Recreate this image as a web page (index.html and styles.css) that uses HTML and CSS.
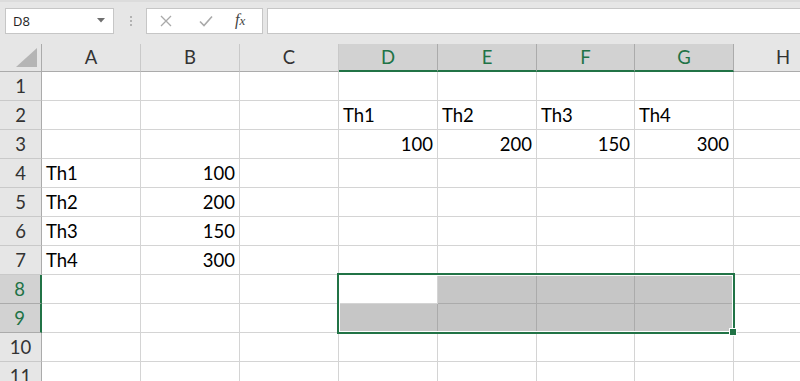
FILE: index.html
```html
<!DOCTYPE html>
<html>
<head>
<meta charset="utf-8">
<link rel="stylesheet" href="styles.css">
</head>
<body>
<div class="app">
  <div class="fbar">
    <div class="namebox">
      <span class="nb-text">D8</span>
      <svg class="caret" width="8" height="5" viewBox="0 0 8 5"><path d="M0 0 H8 L4 4.5 Z" fill="#6f6f6f"/></svg>
    </div>
    <div class="grip"><i></i><i></i><i></i></div>
    <div class="fbtns">
      <svg class="ico-x" width="12" height="12" viewBox="0 0 12 12"><path d="M1 1 L11 11 M11 1 L1 11" stroke="#a9a9a9" stroke-width="1.3" fill="none"/></svg>
      <svg class="ico-check" width="14" height="12" viewBox="0 0 14 12"><path d="M1 6.5 L5 10.5 L13 1.5" stroke="#a9a9a9" stroke-width="1.6" fill="none"/></svg>
      <span class="fx"><span class="fx-f">f</span><span class="fx-x">x</span></span>
    </div>
    <div class="finput"></div>
  </div>

  <div class="sheet">
    <div class="grid">
      <div class="corner"><svg width="22" height="20" viewBox="0 0 22 20"><path d="M21 0 V19 H0 Z" fill="#b5b5b5"/></svg></div>
      <div class="ch">A</div><div class="ch">B</div><div class="ch">C</div>
      <div class="ch hsel">D</div><div class="ch hsel">E</div><div class="ch hsel">F</div><div class="ch hsel">G</div>
      <div class="ch">H</div>

      <div class="rh">1</div><div class="c"></div><div class="c"></div><div class="c"></div><div class="c"></div><div class="c"></div><div class="c"></div><div class="c"></div><div class="c"></div>

      <div class="rh">2</div><div class="c"></div><div class="c"></div><div class="c"></div><div class="c">Th1</div><div class="c">Th2</div><div class="c">Th3</div><div class="c">Th4</div><div class="c"></div>

      <div class="rh">3</div><div class="c"></div><div class="c"></div><div class="c"></div><div class="c num">100</div><div class="c num">200</div><div class="c num">150</div><div class="c num">300</div><div class="c"></div>

      <div class="rh">4</div><div class="c">Th1</div><div class="c num">100</div><div class="c"></div><div class="c"></div><div class="c"></div><div class="c"></div><div class="c"></div><div class="c"></div>

      <div class="rh">5</div><div class="c">Th2</div><div class="c num">200</div><div class="c"></div><div class="c"></div><div class="c"></div><div class="c"></div><div class="c"></div><div class="c"></div>

      <div class="rh">6</div><div class="c">Th3</div><div class="c num">150</div><div class="c"></div><div class="c"></div><div class="c"></div><div class="c"></div><div class="c"></div><div class="c"></div>

      <div class="rh">7</div><div class="c">Th4</div><div class="c num">300</div><div class="c"></div><div class="c"></div><div class="c"></div><div class="c"></div><div class="c"></div><div class="c"></div>

      <div class="rh rsel">8</div><div class="c"></div><div class="c"></div><div class="c"></div><div class="c active"></div><div class="c sel"></div><div class="c sel"></div><div class="c sel"></div><div class="c"></div>

      <div class="rh rsel">9</div><div class="c"></div><div class="c"></div><div class="c"></div><div class="c sel"></div><div class="c sel"></div><div class="c sel"></div><div class="c sel"></div><div class="c"></div>

      <div class="rh">10</div><div class="c"></div><div class="c"></div><div class="c"></div><div class="c"></div><div class="c"></div><div class="c"></div><div class="c"></div><div class="c"></div>

      <div class="rh">11</div><div class="c"></div><div class="c"></div><div class="c"></div><div class="c"></div><div class="c"></div><div class="c"></div><div class="c"></div><div class="c"></div>
    </div>
    <div class="selection"><div class="handle"></div></div>
  </div>
</div>
</body>
</html>
```

FILE: styles.css
```css
* { box-sizing: border-box; }
html, body { margin: 0; padding: 0; background: #fff; }
body { width: 800px; height: 381px; overflow: hidden; }

.app { width: 800px; height: 381px; overflow: hidden; }

.fbar {
  height: 44px;
  background: #e6e6e6;
  border-top: 2px solid #dcdcdc;
  display: flex;
  align-items: flex-start;
  padding: 6px 0 0 5px;
}

.namebox {
  width: 109px;
  height: 26px;
  background: #fff;
  border: 1px solid #c6c6c6;
  display: flex;
  align-items: center;
  justify-content: space-between;
  padding: 0 8px 0 7px;
}
.nb-text {
  font-family: "Open Sans", "Noto Sans", sans-serif;
  font-size: 13px;
  color: #222;
}
.caret { margin-top: -2px; }

.grip {
  width: 32px;
  height: 26px;
  display: flex;
  flex-direction: column;
  align-items: center;
  justify-content: center;
  gap: 2px;
  padding-left: 1px;
}
.grip i { display: block; width: 2px; height: 2px; background: #b2b2b2; }

.fbtns {
  width: 117px;
  height: 26px;
  background: #fff;
  border: 1px solid #c6c6c6;
  display: flex;
  align-items: center;
  padding-left: 13px;
}
.ico-x { margin-right: 27px; }
.ico-check { margin-right: 22px; }
.fx {
  font-family: "Liberation Serif", "DejaVu Serif", serif;
  font-style: italic;
  color: #444;
  font-size: 16px;
  line-height: 1;
  margin-top: -2px;
}
.fx-x { font-size: 13px; }

.finput {
  flex: 1;
  height: 26px;
  margin-left: 4px;
  margin-right: -10px;
  background: #fff;
  border: 1px solid #c6c6c6;
}

.sheet { position: relative; }

.grid {
  display: grid;
  grid-template-columns: 42px 99px 99px 99px 99px 99px 98px 99px 99px;
  grid-template-rows: 28px repeat(11, 29px);
  font-family: Lato, "Open Sans", sans-serif;
  font-size: 18.5px;
  color: #000;
}

.corner {
  background: #e6e6e6;
  border-right: 1px solid #ababab;
  border-bottom: 1px solid #ababab;
  display: flex;
  align-items: flex-end;
  justify-content: flex-end;
  padding: 0 3px 3px 0;
}
.corner svg { display: block; }

.ch {
  background: #e6e6e6;
  border-right: 1px solid #c9c9c9;
  border-bottom: 1px solid #ababab;
  text-align: center;
  line-height: 27px;
  color: #333;
}
.ch.hsel {
  background: #d2d2d2;
  color: #217346;
  border-right-color: #ababab;
  border-bottom: 2px solid #217346;
  line-height: 26px;
}

.rh {
  background: #e6e6e6;
  border-right: 1px solid #ababab;
  border-bottom: 1px solid #c9c9c9;
  text-align: center;
  line-height: 28px;
  color: #333;
}
.rh.rsel {
  background: #d2d2d2;
  color: #217346;
  border-right: 2px solid #217346;
  border-bottom-color: #ababab;
  padding-right: 1px;
}

.c {
  border-right: 1px solid #d4d4d4;
  border-bottom: 1px solid #d4d4d4;
  line-height: 28px;
  padding: 0 4px;
  white-space: nowrap;
  overflow: hidden;
}
.c.num { text-align: right; }
.c.sel {
  background: #c6c6c6;
  border-right-color: #ababab;
  border-bottom-color: #ababab;
}
.c.active { background: #fff; }

.selection {
  position: absolute;
  left: 337px;
  top: 229px;
  width: 398px;
  height: 61px;
  border: 2px solid #217346;
  box-shadow: inset 0 0 0 1px #fff;
  pointer-events: none;
}
.handle {
  position: absolute;
  left: 390px;
  top: 53px;
  width: 8px;
  height: 8px;
  background: #217346;
  border: 1px solid #fff;
}
```
